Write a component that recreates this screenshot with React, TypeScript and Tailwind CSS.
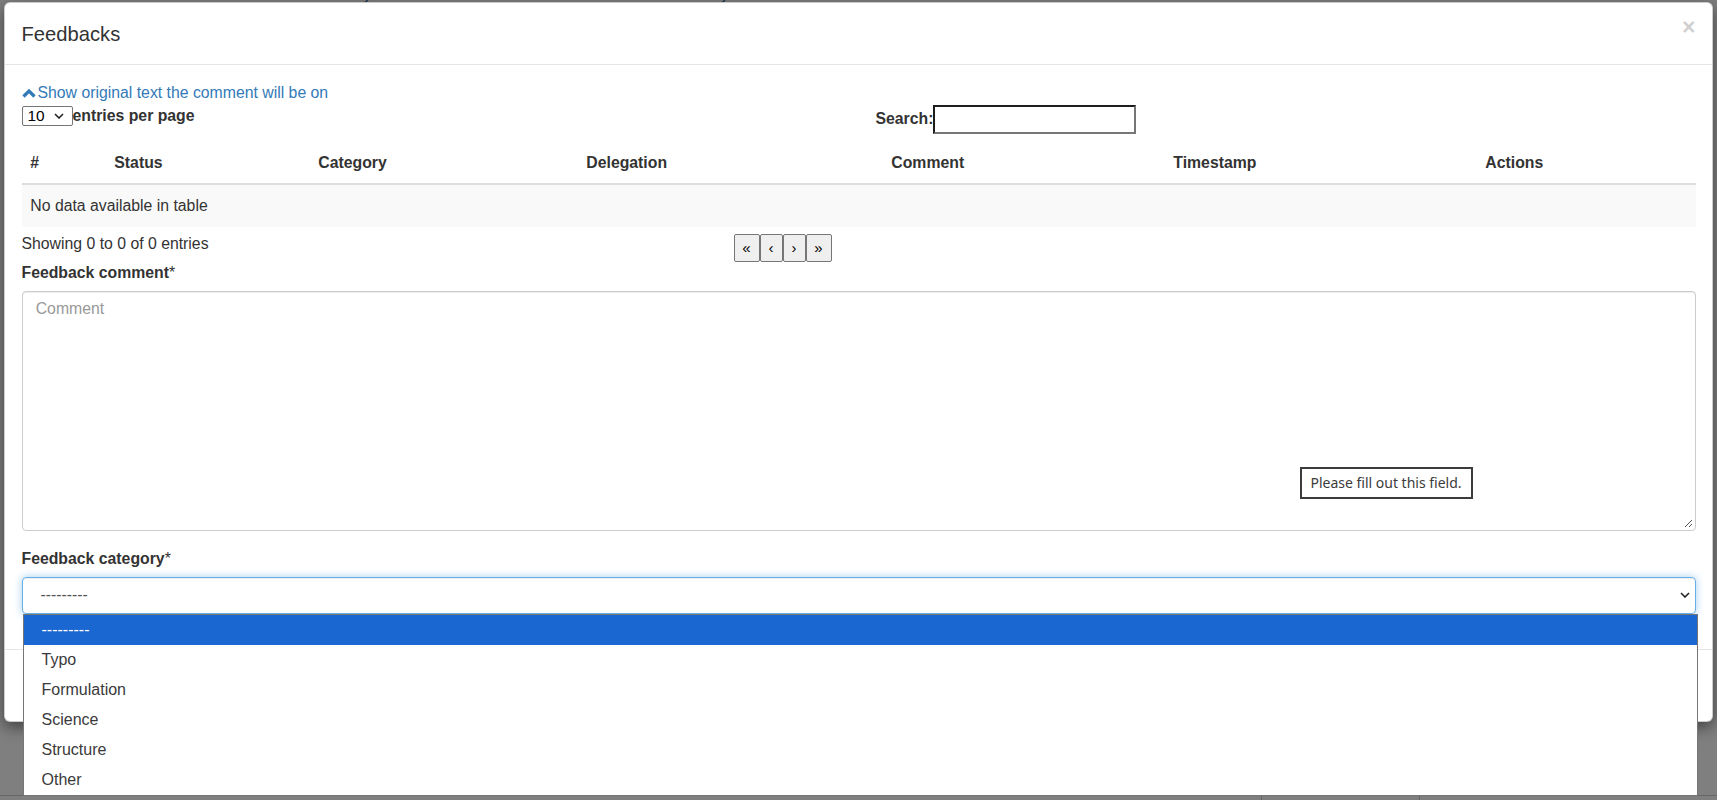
import React from 'react';

const columns = ['#', 'Status', 'Category', 'Delegation', 'Comment', 'Timestamp', 'Actions'];
const categories = ['---------', 'Typo', 'Formulation', 'Science', 'Structure', 'Other'];

const ChevronUp = () => (
  <svg width="14" height="10" viewBox="0 0 14 10" className="mr-[2px]">
    <polyline points="1.5,8.5 7,3 12.5,8.5" fill="none" stroke="#337ab7" strokeWidth="3.2" strokeLinejoin="miter" />
  </svg>
);

const SmallChevron = ({ className = '' }: { className?: string }) => (
  <svg width="10" height="6" viewBox="0 0 10 6" className={className}>
    <polyline points="1,1 5,5 9,1" fill="none" stroke="#222" strokeWidth="1.6" />
  </svg>
);

const App: React.FC = () => {
  return (
    <div
      className="relative w-[1717px] h-[800px] overflow-hidden bg-white"
      style={{ fontFamily: '"Liberation Sans", Arial, sans-serif' }}
    >
      {/* page behind the modal */}
      <div className="flex flex-col h-full">
        <div className="-mt-[13px] pl-[236px] flex gap-[40px] text-[16px] leading-[16px] text-[#2a5a99]">
          <span>02 — Nonlinear Dynamics in Electric Circuits</span>
          <span>14 — Nonlinear Dynamics in Electric Circuits: The Van der Pol</span>
        </div>
        <div className="flex-1" />
        <div className="flex h-[5px] border-t border-[#ccc]">
          <div className="w-[1261px]" />
          <div className="w-[158px] border-l border-[#ccc]" />
          <div className="flex-1 border-l border-[#ccc]" />
        </div>
      </div>

      {/* backdrop */}
      <div className="absolute inset-0 bg-black/50" />

      {/* modal */}
      <div className="absolute left-[4px] top-[2px] w-[1709px] bg-white border border-black/20 rounded-[6px] shadow-[0_5px_15px_rgba(0,0,0,0.5)] text-[15.8px] leading-[22px] text-[#333]">
        <div className="h-[62px] px-[16.5px] flex items-center justify-between border-b border-[#e5e5e5]">
          <h4 className="text-[20.2px] leading-[28px] text-[#333]">Feedbacks</h4>
          <span className="-mt-[12px] text-[23px] font-bold leading-none text-black/20">×</span>
        </div>

        <div className="px-[16.5px] pt-[16.5px]">
          <a className="flex items-center text-[#337ab7] h-[22px] w-fit">
            <ChevronUp />
            Show original text the comment will be on
          </a>

          <div className="grid grid-cols-2 mt-[1px]">
            <div className="flex items-center h-[22px]">
              <div className="w-[51px] h-[20px] border border-[#767676] rounded-[2px] flex items-center justify-between pl-[5px] pr-[8px] text-black">
                <span className="text-[15.4px] leading-[18px]">10</span>
                <SmallChevron />
              </div>
              <span className="font-bold">entries per page</span>
            </div>
            <div className="flex items-center pl-[17px]">
              <span className="font-bold">Search:</span>
              <div className="w-[203px] h-[29px] border-2 border-t-[#1e1e1e] border-l-[#1e1e1e] border-b-[#767676] border-r-[#767676]" />
            </div>
          </div>

          <div className="mt-[9px]">
            <div className="grid grid-cols-[84px_204px_268px_305px_282px_312px_1fr] h-[42px] items-center border-b-2 border-[#ddd] font-bold">
              {columns.map(c => (
                <div key={c} className="px-[8.8px]">{c}</div>
              ))}
            </div>
            <div className="h-[42px] flex items-center px-[8.8px] bg-[#f9f9f9]">No data available in table</div>
          </div>

          <div className="flex items-start mt-[6px] h-[29px]">
            <div className="w-[712px]">Showing 0 to 0 of 0 entries</div>
            <div className="flex mt-[1px]">
              {['«', '‹', '›', '»'].map((s, i) => (
                <button
                  key={i}
                  className={`${i === 0 || i === 3 ? 'w-[26px]' : 'w-[23px]'} h-[28px] bg-[#efefef] border border-[#767676] rounded-[2px] text-[15px] text-black flex items-center justify-center`}
                >
                  {s}
                </button>
              ))}
            </div>
          </div>

          <label className="block font-bold">
            Feedback comment<span className="font-normal">*</span>
          </label>
          <div className="relative mt-[7px]">
            <div className="h-[240px] border border-[#ccc] rounded-[4px] shadow-[inset_0_1px_1px_rgba(0,0,0,0.075)] px-[13.2px] py-[6px] text-[#999]">
              Comment
            </div>
            <svg width="9" height="9" viewBox="0 0 9 9" className="absolute right-[3px] bottom-[3px]">
              <line x1="8" y1="1" x2="1" y2="8" stroke="#555" strokeWidth="1" />
              <line x1="8" y1="5" x2="5" y2="8" stroke="#555" strokeWidth="1" />
            </svg>
            <div className="absolute left-[1278px] top-[176px] w-[173px] h-[32px] border-2 border-[#3c3c3c] bg-white flex items-center justify-center text-[14px] text-[#3c3c3c]" style={{ fontFamily: '"Noto Sans", sans-serif' }}>
              Please fill out this field.
            </div>
          </div>

          <label className="block font-bold mt-[17px]">
            Feedback category<span className="font-normal">*</span>
          </label>
          <div className="relative mt-[7px]">
            <div className="h-[37px] border border-[#66afe9] rounded-[4px] shadow-[inset_0_1px_1px_rgba(0,0,0,0.075),0_0_8px_rgba(102,175,233,0.6)] flex items-center justify-between pl-[18px] pr-[5px] text-[#555]">
              <span>---------</span>
              <SmallChevron />
            </div>
            <div className="absolute left-[1px] top-full w-[1675px] z-10 bg-white border border-[#767676] text-[16px] leading-[30px] text-[#3a3a3a]">
              {categories.map((c, i) => (
                <div key={c} className={`h-[30px] pl-[18px] ${i === 0 ? 'bg-[#1a67d2] text-white' : ''}`}>
                  {c}
                </div>
              ))}
            </div>
          </div>
        </div>

        <div className="mt-[35px] h-[72px] border-t border-[#e5e5e5]" />
      </div>
    </div>
  );
};

export default App;
